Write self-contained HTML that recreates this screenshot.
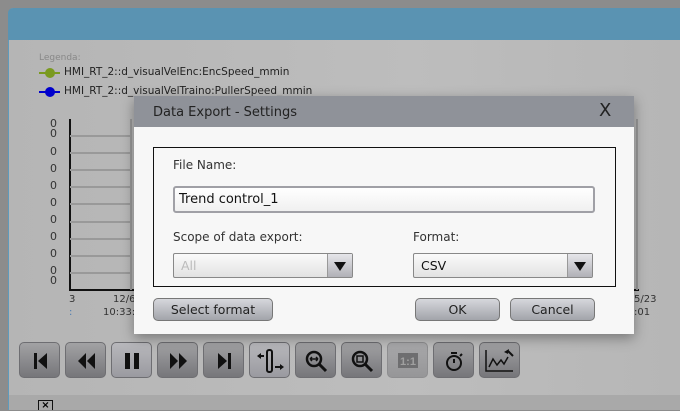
<!DOCTYPE html>
<html><head><style>
*{margin:0;padding:0;box-sizing:border-box}
body{width:680px;height:410px;overflow:hidden;background:#8c8c8c;font-family:"DejaVu Sans","Liberation Sans",sans-serif;position:relative}
.panel{position:absolute;left:8px;top:8px;width:672px;height:402px;background:linear-gradient(90deg,#b5b5b5,#bdbdbd 60%,#b6b6b6);border-left:1px solid #5e9abb;border-radius:5px 0 0 0}
.hdr{position:absolute;left:8px;top:8px;width:672px;height:32px;background:#5a93b2;border-radius:5px 0 0 0}
.bot{position:absolute;left:9px;top:395px;width:671px;height:15px;background:#a9a9a9}
.abs{position:absolute}
.leg{font-size:10.5px;color:#222}
.ax{font-size:11px;color:#333;width:20px;text-align:right;left:37px}
.grid{position:absolute;left:70px;width:62px;height:2px;background:#999}
.btn{position:absolute;top:342px;width:41px;height:36px;border-radius:5px;background:linear-gradient(#a2a2a4,#76767a);border:1px solid #6e6e72}
.btn.l{background:linear-gradient(#b8b8bc,#9a9aa0)}
.btn svg{position:absolute;left:0;top:0}
.dlg{position:absolute;left:134px;top:96px;width:500px;height:238px;background:#f7f7f7;box-shadow:0 4px 12px rgba(0,0,0,.35)}
.tb{position:absolute;left:0;top:0;width:500px;height:31px;background:#8f9299;font-size:13px;color:#222}
.box{position:absolute;left:19px;top:51px;width:463px;height:140px;border:1.5px solid #111}
.lbl{position:absolute;font-size:12px;color:#333}
.inp{position:absolute;border:2px solid #a0a0a6;border-radius:3px;background:linear-gradient(#fff,#f0f0f0)}
.sel{position:absolute;height:25px;border:1px solid #888;border-radius:2px;background:linear-gradient(#fafafa,#e2e2e2);font-size:12.5px}
.sel .ar{position:absolute;right:0;top:0;width:25px;height:23px;border-left:1px solid #999;background:linear-gradient(#e6e6ea,#b0b0b6)}
.sel .ar:after{content:"";position:absolute;left:6px;top:8px;border-left:6px solid transparent;border-right:6px solid transparent;border-top:9px solid #111}
.pb{position:absolute;top:202px;height:23px;border:1px solid #777;border-radius:5px;background:linear-gradient(#d6d7dc,#a2a4aa);font-size:12.5px;color:#222;text-align:center;line-height:21px}
</style></head><body>
<div class="panel"></div>
<div class="hdr"></div>
<div class="bot"></div>
<div class="abs" style="left:39px;top:53px;font-size:9px;color:#888">Legenda:</div>
<div class="abs" style="left:39px;top:72px;width:21px;height:2px;background:#7a9a1e"></div>
<div class="abs" style="left:45px;top:68px;width:10px;height:10px;border-radius:5px;background:#7a9a1e"></div>
<div class="abs leg" style="left:64px;top:66px">HMI_RT_2::d_visualVelEnc:EncSpeed_mmin</div>
<div class="abs" style="left:39px;top:91px;width:21px;height:2px;background:#0000cc"></div>
<div class="abs" style="left:45px;top:87px;width:10px;height:10px;border-radius:5px;background:#0000cc"></div>
<div class="abs leg" style="left:64px;top:85px">HMI_RT_2::d_visualVelTraino:PullerSpeed_mmin</div>
<div class="abs" style="left:69px;top:119px;width:2px;height:171px;background:#111"></div>
<div class="abs" style="left:69px;top:289px;width:570px;height:2px;background:#111"></div>
<div class="abs" style="left:130px;top:119px;width:2px;height:171px;background:#999"></div>
<div class="abs" style="left:636px;top:119px;width:2px;height:171px;background:#999"></div>
<div class="grid" style="top:135px"></div><div class="grid" style="top:152px"></div><div class="grid" style="top:169px"></div><div class="grid" style="top:186px"></div><div class="grid" style="top:203px"></div><div class="grid" style="top:221px"></div><div class="grid" style="top:238px"></div><div class="grid" style="top:255px"></div><div class="grid" style="top:272px"></div>
<div class="abs ax" style="top:117px">0</div><div class="abs ax" style="top:127px">0</div><div class="abs ax" style="top:145px">0</div><div class="abs ax" style="top:162px">0</div><div class="abs ax" style="top:179px">0</div><div class="abs ax" style="top:196px">0</div><div class="abs ax" style="top:213px">0</div><div class="abs ax" style="top:230px">0</div><div class="abs ax" style="top:247px">0</div><div class="abs ax" style="top:264px">0</div><div class="abs ax" style="top:274px">0</div>
<div class="abs" style="left:69px;top:294px;font-size:10px;color:#333">3</div>
<div class="abs" style="left:69px;top:307px;font-size:10px;color:#4a7bb0">:</div>
<div class="abs" style="left:113px;top:294px;font-size:10px;color:#333">12/6</div>
<div class="abs" style="left:103px;top:307px;font-size:10px;color:#333">10:33:</div>
<div class="abs" style="left:634px;top:294px;font-size:10px;color:#333">5/23</div>
<div class="abs" style="left:634px;top:307px;font-size:10px;color:#333">:01</div>

<div class="btn" style="left:19px"><svg width="41" height="36"><rect x="14" y="10" width="3" height="16" fill="#111"/><path d="M27 10V26L18 18Z" fill="#111"/></svg></div>
<div class="btn" style="left:65px"><svg width="41" height="36"><path d="M20 10V26L12 18Z M29 10V26L21 18Z" fill="#111"/></svg></div>
<div class="btn l" style="left:111px"><svg width="41" height="36"><rect x="13" y="10" width="5" height="16" fill="#111"/><rect x="22" y="10" width="5" height="16" fill="#111"/></svg></div>
<div class="btn" style="left:157px"><svg width="41" height="36"><path d="M12 10V26L20 18Z M21 10V26L29 18Z" fill="#111"/></svg></div>
<div class="btn" style="left:203px"><svg width="41" height="36"><path d="M14 10V26L23 18Z" fill="#111"/><rect x="24" y="10" width="3" height="16" fill="#111"/></svg></div>
<div class="btn l" style="left:249px"><svg width="41" height="36"><rect x="17" y="7" width="5" height="22" rx="2" fill="none" stroke="#111" stroke-width="2"/><path d="M7 13L11 10V16Z" fill="#111"/><rect x="10" y="12" width="4" height="2" fill="#111"/><path d="M34 24L30 21V27Z" fill="#111"/><rect x="25" y="23" width="6" height="2" fill="#111"/></svg></div>
<div class="btn" style="left:295px"><svg width="41" height="36"><circle cx="18" cy="16" r="7" fill="none" stroke="#111" stroke-width="2.5"/><path d="M23 21L30 28" stroke="#111" stroke-width="3"/><path d="M14 16H22M14 16l2-2M14 16l2 2M22 16l-2-2M22 16l-2 2" stroke="#111" stroke-width="1.5" fill="none"/></svg></div>
<div class="btn" style="left:341px"><svg width="41" height="36"><circle cx="18" cy="16" r="7" fill="none" stroke="#111" stroke-width="2.5"/><path d="M23 21L30 28" stroke="#111" stroke-width="3"/><rect x="15" y="13" width="6" height="6" fill="none" stroke="#111" stroke-width="1.5"/></svg></div>
<div class="btn" style="left:387px;background:linear-gradient(#a8a8aa,#969698);border-color:#8e8e90"><svg width="41" height="36"><rect x="10" y="10" width="20" height="15" fill="#6e6e70"/><text x="20" y="22" font-size="11" font-weight="bold" fill="#a0a0a0" text-anchor="middle" font-family="Liberation Sans">1:1</text></svg></div>
<div class="btn" style="left:433px"><svg width="41" height="36"><circle cx="20" cy="20" r="7" fill="none" stroke="#111" stroke-width="2"/><rect x="17" y="9" width="6" height="2" fill="#111"/><path d="M20 16V20" stroke="#111" stroke-width="2"/><path d="M26 13L28 11" stroke="#111" stroke-width="2"/></svg></div>
<div class="btn" style="left:479px"><svg width="41" height="36"><path d="M6 7V28H33" fill="none" stroke="#111" stroke-width="1.5"/><path d="M9 24L13 16L17 22L21 17L24 21L28 14" fill="none" stroke="#111" stroke-width="1.5"/><path d="M28 8L33 13" stroke="#111" stroke-width="2"/><path d="M24 9L29 6L28 11Z" fill="#111"/></svg></div>

<div class="abs" style="left:38px;top:400px;width:15px;height:10px;border:1.5px solid #111;border-bottom:none;font-size:10px;line-height:9px;text-align:center;font-weight:bold">×</div>

<div class="dlg">
<div class="tb"><span style="position:absolute;left:19px;top:9px">Data Export - Settings</span><span style="position:absolute;left:465px;top:4px;font-size:18px">X</span></div>
<div class="box"></div>
<div class="lbl" style="left:39px;top:62px">File Name:</div>
<div class="inp" style="left:39px;top:90px;width:422px;height:27px"><span style="position:absolute;left:4px;top:4px;font-size:13px;color:#111">Trend control_1</span></div>
<div class="lbl" style="left:39px;top:134px">Scope of data export:</div>
<div class="lbl" style="left:279px;top:134px">Format:</div>
<div class="sel" style="left:39px;top:157px;width:180px"><span style="position:absolute;left:7px;top:4px;color:#bbb">All</span><div class="ar"></div></div>
<div class="sel" style="left:279px;top:157px;width:180px"><span style="position:absolute;left:7px;top:4px;color:#111">CSV</span><div class="ar"></div></div>
<div class="pb" style="left:19px;width:120px">Select format</div>
<div class="pb" style="left:281px;width:85px">OK</div>
<div class="pb" style="left:376px;width:85px">Cancel</div>
</div>
</body></html>
